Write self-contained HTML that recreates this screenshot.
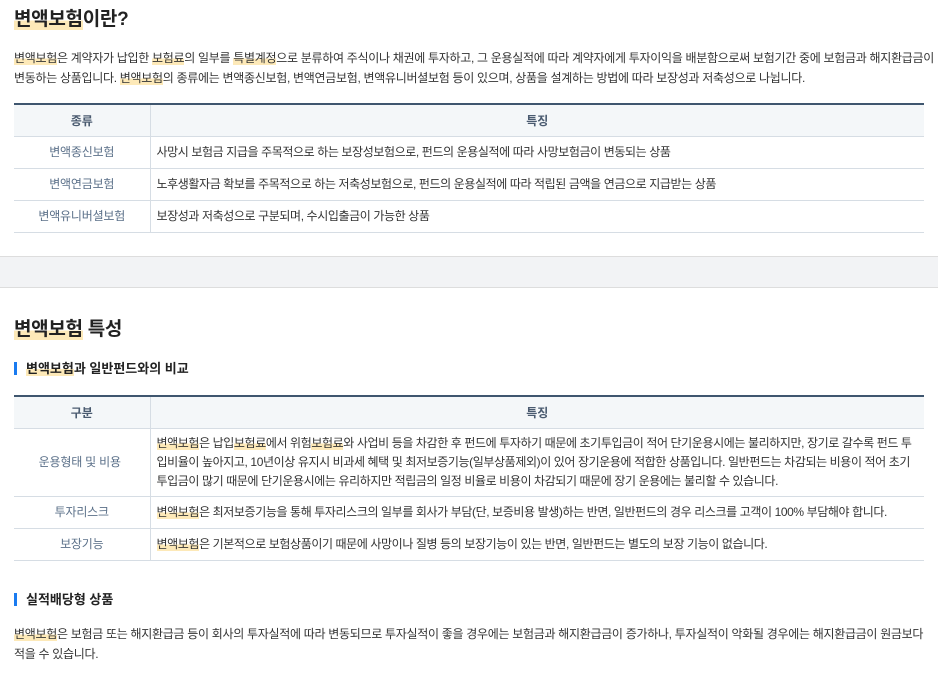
<!DOCTYPE html>
<html><head><meta charset="utf-8"><style>
body{margin:0;width:938px;height:682px;overflow:hidden;background:#fff;font-family:"Liberation Sans","Noto Sans CJK KR",sans-serif;color:#333;}
h2{font-size:19px;font-weight:bold;margin:0;color:#222;position:absolute;left:14px;letter-spacing:-0.3px;}
mark{background:linear-gradient(transparent 55%,#fde9b8 55%);color:inherit;}
p{font-size:12px;line-height:20px;margin:0;position:absolute;left:14px;width:914px;letter-spacing:-0.3px;}
table{position:absolute;left:14px;width:910px;border-collapse:collapse;font-size:12px;border-top:2px solid #3f566f;table-layout:fixed;}
th{background:#f4f7f9;color:#4a5b70;font-weight:bold;height:31px;padding:0;border-bottom:1px solid #d6dde4;}
td{border-bottom:1px solid #d6dde4;padding:6px 6px;line-height:19px;letter-spacing:-0.4px;}
td:first-child,th:first-child{border-right:1px solid #d6dde4;text-align:center;color:#5b7089;}
td:first-child{padding:6px 0;letter-spacing:-0.2px;}
th:first-child{color:#4a5b70;}
tr.big td{padding-top:5px;padding-bottom:5px;padding-right:4px;}
h3{position:absolute;left:14px;margin:0;font-size:13px;font-weight:bold;color:#222;padding-left:9px;border-left:3px solid #1a7bf0;line-height:13px;}
.band{position:absolute;left:0;top:256px;width:938px;height:30px;background:#f2f3f5;border-top:1px solid #ddd;border-bottom:1px solid #ddd;}
</style></head><body>
<h2 style="top:4px"><mark>변액보험</mark>이란?</h2>
<p style="top:48px;width:922px"><mark>변액보험</mark>은 계약자가 납입한 <mark>보험료</mark>의 일부를 <mark>특별계정</mark>으로 분류하여 주식이나 채권에 투자하고, 그 운용실적에 따라 계약자에게 투자이익을 배분함으로써 보험기간 중에 보험금과 해지환급금이 변동하는 상품입니다. <mark>변액보험</mark>의 종류에는 변액종신보험, 변액연금보험, 변액유니버셜보험 등이 있으며, 상품을 설계하는 방법에 따라 보장성과 저축성으로 나뉩니다.</p>
<table style="top:103px">
<colgroup><col style="width:136px"><col></colgroup>
<tr><th>종류</th><th>특징</th></tr>
<tr><td>변액종신보험</td><td>사망시 보험금 지급을 주목적으로 하는 보장성보험으로, 펀드의 운용실적에 따라 사망보험금이 변동되는 상품</td></tr>
<tr><td>변액연금보험</td><td>노후생활자금 확보를 주목적으로 하는 저축성보험으로, 펀드의 운용실적에 따라 적립된 금액을 연금으로 지급받는 상품</td></tr>
<tr><td>변액유니버셜보험</td><td>보장성과 저축성으로 구분되며, 수시입출금이 가능한 상품</td></tr>
</table>
<div class="band"></div>
<h2 style="top:314px"><mark>변액보험</mark> 특성</h2>
<h3 style="top:362px"><mark>변액보험</mark>과 일반펀드와의 비교</h3>
<table style="top:395px">
<colgroup><col style="width:136px"><col></colgroup>
<tr><th>구분</th><th>특징</th></tr>
<tr class="big"><td>운용형태 및 비용</td><td><mark>변액보험</mark>은 납입<mark>보험료</mark>에서 위험<mark>보험료</mark>와 사업비 등을 차감한 후 펀드에 투자하기 때문에 초기투입금이 적어 단기운용시에는 불리하지만, 장기로 갈수록 펀드 투입비율이 높아지고, 10년이상 유지시 비과세 혜택 및 최저보증기능(일부상품제외)이 있어 장기운용에 적합한 상품입니다. 일반펀드는 차감되는 비용이 적어 초기투입금이 많기 때문에 단기운용시에는 유리하지만 적립금의 일정 비율로 비용이 차감되기 때문에 장기 운용에는 불리할 수 있습니다.</td></tr>
<tr><td>투자리스크</td><td><mark>변액보험</mark>은 최저보증기능을 통해 투자리스크의 일부를 회사가 부담(단, 보증비용 발생)하는 반면, 일반펀드의 경우 리스크를 고객이 100% 부담해야 합니다.</td></tr>
<tr><td>보장기능</td><td><mark>변액보험</mark>은 기본적으로 보험상품이기 때문에 사망이나 질병 등의 보장기능이 있는 반면, 일반펀드는 별도의 보장 기능이 없습니다.</td></tr>
</table>
<h3 style="top:593px">실적배당형 상품</h3>
<p style="top:624px"><mark>변액보험</mark>은 보험금 또는 해지환급금 등이 회사의 투자실적에 따라 변동되므로 투자실적이 좋을 경우에는 보험금과 해지환급금이 증가하나, 투자실적이 악화될 경우에는 해지환급금이 원금보다 적을 수 있습니다.</p>
</body></html>
